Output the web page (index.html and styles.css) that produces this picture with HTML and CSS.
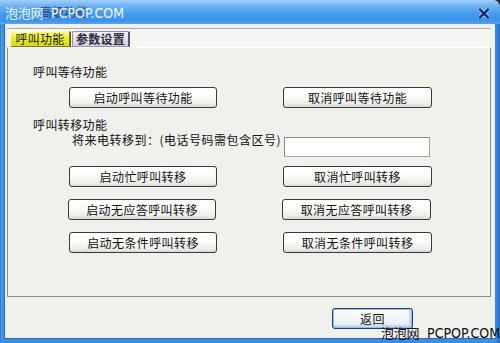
FILE: index.html
```html
<!DOCTYPE html>
<html lang="zh-CN">
<head>
    <meta charset="UTF-8">
    <title>高级功能</title>
    <link rel="stylesheet" href="styles.css">
</head>
<body>
    <div class="window">
        <div class="titlebar">
            <span class="title">高级功能</span>
            <span class="close">
                <svg width="12" height="11" viewBox="0 0 12 11">
                    <path d="M2 1.5 L10 9.5 M10 1.5 L2 9.5" stroke="#fff" stroke-width="4" stroke-linecap="round" opacity="0.45"/>
                    <path d="M2 1.5 L10 9.5 M10 1.5 L2 9.5" stroke="#1b2468" stroke-width="2.4" stroke-linecap="square"/>
                </svg>
            </span>
        </div>

        <div class="client">
            <div class="tabctl">
                <div class="tabs">
                    <span class="tab active">呼叫功能</span>
                    <span class="tab">参数设置</span>
                </div>

                <div class="panel">
                    <div class="label first">呼叫等待功能</div>
                    <div class="row first">
                        <button class="btn">启动呼叫等待功能</button>
                        <button class="btn right">取消呼叫等待功能</button>
                    </div>

                    <div class="label second">呼叫转移功能</div>
                    <div class="input-row">
                        <span class="input-label">将来电转移到：(电话号码需包含区号)</span>
                        <input type="text" class="phone">
                    </div>

                    <div class="row">
                        <button class="btn">启动忙呼叫转移</button>
                        <button class="btn right">取消忙呼叫转移</button>
                    </div>
                    <div class="row wide-gap shifted">
                        <button class="btn">启动无应答呼叫转移</button>
                        <button class="btn right">取消无应答呼叫转移</button>
                    </div>
                    <div class="row wide-gap">
                        <button class="btn">启动无条件呼叫转移</button>
                        <button class="btn right">取消无条件呼叫转移</button>
                    </div>
                </div>
            </div>

            <div class="footer">
                <button class="btn btn-default">返回</button>
            </div>
        </div>

        <div class="watermark wm-top"><span class="wm-cn">泡泡网</span><span class="wm-en">PCPOP.COM</span></div>
        <div class="watermark wm-bottom"><span class="wm-cn">泡泡网</span><span class="wm-en">PCPOP.COM</span></div>
    </div>
</body>
</html>
```

FILE: styles.css
```css
body {
    margin: 0;
    padding: 0;
    background-color: #1d2b3c;
    font-family: "Noto Sans CJK SC", "Liberation Sans", sans-serif;
    font-size: 12px;
}

.window {
    position: relative;
    width: 500px;
    height: 343px;
    display: flex;
    flex-direction: column;
    background: linear-gradient(90deg, #1f62b8 0, #4a9cec 1px, #3a8ce6 4px, #3a8ce6 495px, #2a74cc 499px);
    border-top-right-radius: 7px;
    overflow: hidden;
}

.titlebar {
    height: 24px;
    flex: none;
    display: flex;
    align-items: center;
    justify-content: space-between;
    padding: 0 10px 0 40px;
    background: linear-gradient(#a2cff8 0, #6db3f3 25%, #4499ec 60%, #3d93ea 85%, #56a6ef 100%);
}

.title {
    color: #23325a;
    font-size: 12px;
    line-height: 14px;
    opacity: 0.8;
}

.close {
    display: flex;
    margin-top: 2px;
}

.client {
    flex: 1;
    display: flex;
    flex-direction: column;
    margin: 0 5px 5px 4px;
    background-color: #f0f0ec;
    border-left: 1px solid #2a6cc0;
    box-shadow: 0 1px 0 #2a6cc0;
}

.tabctl {
    margin: 4px 4px 0 2px;
    padding-top: 2px;
    border-top: 1px solid #a9a9a1;
    background-color: #f5f5f3;
}

.tabs {
    display: flex;
    height: 16px;
    padding-left: 3px;
}

.tab {
    box-sizing: border-box;
    height: 16px;
    line-height: 14px;
    text-align: center;
    letter-spacing: 0.3px;
    border-radius: 2px 2px 0 0;
}

.tab.active {
    width: 60px;
    color: #1a1a10;
    background: linear-gradient(#fafa8a, #e8e82a 50%, #dada18);
    border: 1px solid #7e7e2a;
    border-top-color: #fdfdd0;
    border-left-color: #fdfdd0;
    box-shadow: 1px 0 0 #5a5a20;
}

.tab:not(.active) {
    width: 58px;
    margin-left: 2px;
    color: #2a2a40;
    font-weight: bold;
    background: linear-gradient(#f2f0f6, #d4d2de);
    border: 1px solid #9a8cba;
    border-right: 2px solid #5a5478;
}

.panel {
    box-sizing: border-box;
    height: 250px;
    border: 1px solid #8c8c84;
    border-top-color: #ffffff;
    background-color: #f0f0ec;
}

.label {
    line-height: 14px;
    padding-left: 25px;
    letter-spacing: 0.4px;
    color: #111;
}

.label.first {
    margin-top: 17px;
}

.label.second {
    margin-top: 10px;
}

.row {
    display: flex;
    gap: 66px;
    padding-left: 61px;
    margin-top: 9px;
}

.row.first {
    margin-top: 8px;
}

.row.wide-gap {
    margin-top: 12px;
}

.row.shifted {
    padding-left: 60px;
}

.btn {
    box-sizing: border-box;
    width: 148px;
    height: 21px;
    padding: 0;
    font-family: "Noto Sans CJK SC", "Liberation Sans", sans-serif;
    font-size: 12px;
    letter-spacing: 0.4px;
    line-height: 14px;
    color: #111;
    background: linear-gradient(#ffffff 0, #fbfbf9 45%, #ececea 85%, #d8d8d2 100%);
    border: 1px solid #3a3a3a;
    border-radius: 3px;
}

.btn.right {
    width: 149px;
}

.input-row {
    display: flex;
    align-items: flex-start;
    margin-top: 5px;
    padding-left: 64px;
}

.input-label {
    width: 212px;
    margin-top: -4px;
    line-height: 14px;
    letter-spacing: 0.5px;
    color: #111;
    white-space: nowrap;
}

.phone {
    box-sizing: border-box;
    width: 146px;
    height: 20px;
    margin: 0;
    background-color: #ffffff;
    border: 1px solid #a5a59d;
    border-top-color: #8e8e86;
    border-left-color: #8e8e86;
}

.footer {
    padding: 11px 0 0 327px;
}

.btn-default {
    width: 81px;
    height: 21px;
    border: 1px solid #1d3f78;
    box-shadow: inset 0 0 0 1px #9dbbe6, inset -1px -1px 0 2px #c8d8f0;
    background: linear-gradient(#ffffff 0, #f4f6fa 50%, #dfe5ef 100%);
}

.watermark {
    position: absolute;
    white-space: nowrap;
    line-height: 16px;
}

.wm-cn {
    font-family: "Noto Sans CJK SC", sans-serif;
    font-size: 13px;
    letter-spacing: -0.3px;
}

.wm-en {
    margin-left: 8px;
    font-family: "DejaVu Sans Condensed", "DejaVu Sans", sans-serif;
    font-stretch: condensed;
    font-size: 14px;
}

.wm-top {
    left: 5px;
    top: 5px;
    color: #ffffff;
    opacity: 0.92;
}

.wm-bottom {
    left: 381px;
    top: 325px;
    color: #111;
}
```
